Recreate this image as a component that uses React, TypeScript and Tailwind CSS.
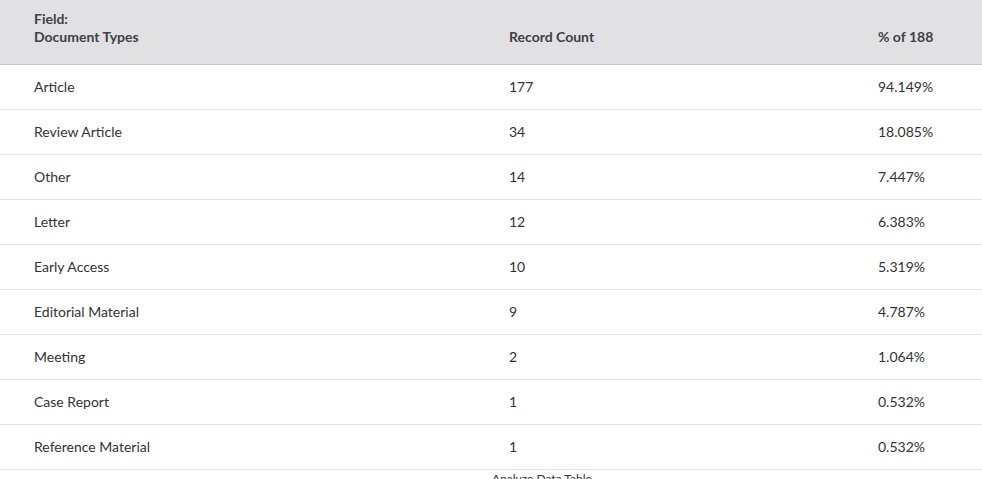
const rows: Array<{ label: string; count: number; pct: string }> = [
  { label: "Article", count: 177, pct: "94.149%" },
  { label: "Review Article", count: 34, pct: "18.085%" },
  { label: "Other", count: 14, pct: "7.447%" },
  { label: "Letter", count: 12, pct: "6.383%" },
  { label: "Early Access", count: 10, pct: "5.319%" },
  { label: "Editorial Material", count: 9, pct: "4.787%" },
  { label: "Meeting", count: 2, pct: "1.064%" },
  { label: "Case Report", count: 1, pct: "0.532%" },
  { label: "Reference Material", count: 1, pct: "0.532%" },
];

export default function App() {
  return (
    <div className="h-[479px] w-[982px] overflow-hidden bg-white font-['Lato','Liberation_Sans',sans-serif] text-[14px] text-[#333]">
      <div className="grid h-[65px] grid-cols-[475px_369px_1fr] items-end border-b border-[#c6c6c9] bg-[#e1e1e4] pb-[18px] font-bold text-[#3f3f46]">
        <div className="pl-[34px] leading-[18px]">
          <div>Field:</div>
          <div>Document Types</div>
        </div>
        <div className="pl-[34px] leading-[18px]">Record Count</div>
        <div className="pl-[34px] leading-[18px]">% of 188</div>
      </div>
      {rows.map((row) => (
        <div key={row.label} className="grid h-[45px] grid-cols-[475px_369px_1fr] items-center border-b border-[#e3e3e3] pb-[2px]">
          <div className="pl-[34px]">{row.label}</div>
          <div className="pl-[34px]">{row.count}</div>
          <div className="pl-[34px]">{row.pct}</div>
        </div>
      ))}
      <div className="pl-[492px] pt-[2px] text-[12px] leading-[14px] text-[#333]">Analyze Data Table</div>
    </div>
  );
}
